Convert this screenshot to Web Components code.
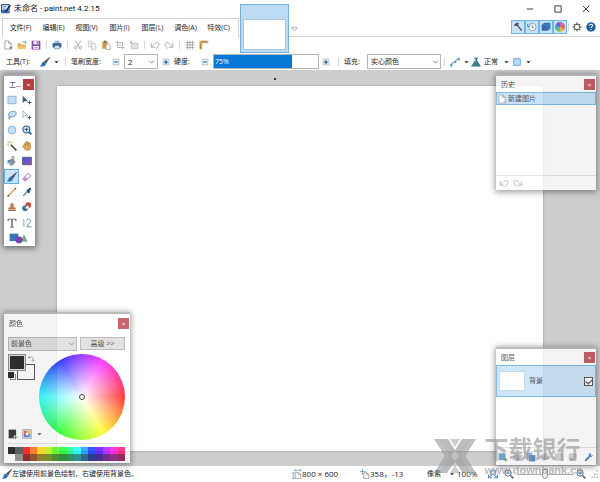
<!DOCTYPE html>
<html lang="zh-CN">
<head>
<meta charset="utf-8">
<title>未命名 - paint.net 4.2.15</title>
<style>
html,body{height:100%}
body{margin:0;overflow:hidden;background:#fff;color:#222;font:7px/10px "Open Sans","Noto Sans CJK SC",sans-serif}
</style>
</head>
<body>
<paint-app></paint-app>
<script>
const RESET = `*{box-sizing:border-box}
button,input,select{font:inherit;color:inherit;margin:0;padding:0;border:0;background:none;border-radius:0}
button{display:flex;align-items:center;justify-content:center}`;

function define(name, html, setup) {
  const template = document.createElement('template');
  template.innerHTML = `<style>${RESET}</style>` + html;
  customElements.define(name, class extends HTMLElement {
    connectedCallback() {
      if (this.shadowRoot) return;
      this.attachShadow({mode: 'open'}).append(template.content.cloneNode(true));
      if (setup) setup(this, this.shadowRoot);
    }
  });
}

const page = (c) => `<path d="M3 1.5h6l4 4V14.5H3z M9 1.5v4h4" fill="#fff" stroke="${c}"/>`;
const brush = `<path d="M15.5.5 7 7.500l2.500 2.500z" fill="#444" stroke="#555" stroke-width="1.200"/><path d="M.5 14.800c2-.3 2-2 2.500-4C4 8 6.500 7.500 8 9s1 4-1.200 5-4.300.9-6.300.8z" fill="#2470b8" stroke="#2470b8"/>`;
const arrowTail = `<path d="M12 9v6M9 12h6" stroke="#34516e" stroke-width="1.500"/>`;
const lens = (mark) => `<circle cx="6.500" cy="6.500" r="5" fill="#eef6fc" stroke="#55697c" stroke-width="1.500"/><path d="m10.500 10.500 4.500 4.500" stroke="#55697c" stroke-width="2.500"/>${mark}`;
const plusMark = `<path d="M4 6.500h5M6.500 4v5" stroke="#1f6fb5" stroke-width="1.400"/>`;
const undo = `<path d="M2 5v6.500h6.500M2.500 11 8 5.500c4-3.500 8 0 5.500 4L10 14" fill="none" stroke="#999" stroke-width="1.300"/>`;
const ICONS = {
  app: `<path d="M1 1h12v13H1z" fill="#dcebf7" stroke="#23407c" stroke-width="1.600"/><path d="M2 9h10v4H2z" fill="#2d62ac"/><path d="M3 4h6M3 6.500h4" stroke="#4d77ad"/><path d="m15 2-6 8-2 2" stroke="#222d46" stroke-width="2.500"/>`,
  new: page('#777') + `<path d="M12.500 10v5M10 12.500h5" stroke="#4c9a50" stroke-width="1.600"/>`,
  page: page('#777') + `<path d="M10 12.500h5" stroke="#8aa" stroke-width="1.500"/>`,
  open: `<path d="M1 5h5l1 2h7v7H1z" fill="#e4ad54"/><path d="m1 14 2-5h12l-2 5z" fill="#f1c470"/><path d="M9 3h5v3" fill="none" stroke="#5c9a5e" stroke-width="1.500"/>`,
  save: `<path d="M1 1h12.500L15 2.500V15H1z" fill="#8a4fa4"/><path d="M4 1.800h8v5H4zM3.500 9.500h9V14h-9z" fill="#fff"/><path d="M9 2.500h2v3H9zM5 11h6v1H5z" fill="#8a4fa4"/>`,
  print: `<path d="M4 1h8v4H4z" fill="#9ebbd5"/><path d="M1 5h14v7H1z" fill="#2f5f94"/><path d="M4 9h8v5H4z" fill="#d6e7f5" stroke="#4c79a9"/>`,
  cut: `<path d="m3 1 7.500 10M13 1 5.500 11" stroke="#a4a4a4" stroke-width="1.400"/><g fill="none" stroke="#a4a4a4" stroke-width="1.400"><circle cx="4" cy="12.500" r="2"/><circle cx="12" cy="12.500" r="2"/></g>`,
  copy: `<path d="M2 1.500h5l2 2V11H2z" fill="#eee" stroke="#b4b4b4"/><path d="M7 5.500h5l2 2V15H7z" fill="#f5f5f5" stroke="#b4b4b4"/>`,
  paste: `<path d="M2 2.500h9V14H2z" fill="#d99b46"/><path d="M4.500 1h4v3h-4z" fill="#666"/><path d="M8 6.500h4l2.500 2V15H8z" fill="#fff" stroke="#888"/>`,
  crop: `<path d="M4 1v11h11M1 4h11v11" fill="none" stroke="#b3b3b3" stroke-width="1.500"/><path d="M6 6h4v4H6z" fill="#ddd"/>`,
  deselect: `<path d="M4 5h10v9H4z" fill="#e2e2e2" stroke="#b0b0b0"/><path d="m1 1 5 5m0-5L1 6" stroke="#aaa" stroke-width="1.400"/>`,
  undo, redo: `<g transform="matrix(-1 0 0 1 16 0)">${undo}</g>`,
  grid: `<path d="M4 1v14M8 1v14M12 1v14M1 4h14M1 8h14M1 12h14" stroke="#999" stroke-width="1.200"/>`,
  ruler: `<path d="M1 1h14v4H5v10H1z" fill="#d4a165"/><path d="M5 1v2M8 1v2M11 1v2M1 6h2M1 9h2M1 12h2" stroke="#755126"/>`,
  hammer: `<path d="m2 5 4-3.500 3 1L7 5 5 6z" fill="#444" stroke="#444"/><path d="m6 4 8 10" stroke="#555" stroke-width="2"/>`,
  clock: `<circle cx="8.500" cy="8" r="6" fill="#f9fcff" stroke="#8796a4" stroke-width="1.400"/><path d="M8 4v4.500l3 1" fill="none" stroke="#5b7388" stroke-width="1.300"/><path d="M1 3v4h4" fill="none" stroke="#3c8bcc" stroke-width="1.500"/>`,
  layers: `<path d="M1 5 5 1h10v9l-4 4H1z" fill="#336cae"/><path d="M1 5h10l4-4M11 5v9" stroke="#5a8fc7" fill="none"/>`,
  gear: `<path d="M8 .8v3M8 12.200v3M.8 8h3M12.200 8h3M3 3l2 2M11 11l2 2M3 13l2-2M11 5l2-2" stroke="#555" stroke-width="2"/><circle cx="8" cy="8" r="4.300" fill="#fff" stroke="#555" stroke-width="1.500"/>`,
  help: `<circle cx="8" cy="8" r="7.500" fill="#205e9d"/><path d="M5.500 6c0-3.500 5.500-3 5 0-.3 1.500-2.500 1.500-2.500 3.500M8 11v1.800" fill="none" stroke="#fff" stroke-width="1.700"/>`,
  brush,
  minus: `<path d="M3.500 3.500h9v9h-9z" fill="#f8fbff" stroke="#7f9fbd"/><path d="M5 8h6" stroke="#245f98" stroke-width="1.800"/>`,
  plus: `<path d="M3.500 3.500h9v9h-9z" fill="#f8fbff" stroke="#7f9fbd"/><path d="M5 8h6M8 5v6" stroke="#245f98" stroke-width="2"/>`,
  caret: `<path d="M3 6h10l-5 5z" fill="#222"/>`,
  curve: `<path d="M2 13c2-7 5-3 6-5s2-4 6-5" fill="none" stroke="#4a88bf" stroke-width="1.600"/><g fill="#6e9cc6"><path d="M0 11h4v4H0zM6 6h4v4H6zM12 1h4v4h-4z"/></g>`,
  flask: `<path d="M5 1h6v1.500h-1V6l6 9H0l6-9V2.500H5z" fill="#35749a"/><path d="m5 9-3 5h6l2-5z" fill="#438f5c"/><path d="M7 3h1v4H7z" fill="#cfe5f5"/>`,
  circleSelect: `<circle cx="8" cy="8" r="6" fill="#b8dbf6" stroke="#68a5d5" stroke-width="1.500"/><path d="M2 2h3M11 2h3M2 14h3M11 14h3M2 2v3M14 2v3M2 11v3M14 11v3" stroke="#8ab4d6"/>`,
  rect: `<path d="M1.500 2h13v12h-13z" fill="#c1e0f7" stroke="#6b99be"/>`,
  move: `<path d="M1 1v12l3-3h6z" fill="#34658f"/>${arrowTail}`,
  moveSel: `<path d="M1.500 1.500V12l3-2.500h5z" fill="#fff" stroke="#7390a9"/>${arrowTail}`,
  lasso: `<path d="M4 11C1 7 3 3 9 2s7 4 4 7-6 2-9 2zc-3 1-2 3 0 2s1 2-1 2" fill="#c5e3f8" stroke="#527fa6" stroke-width="1.300"/>`,
  ellipse: `<circle cx="8" cy="8" r="6.300" fill="#c1e0f7" stroke="#6b99be"/>`,
  zoom: `<circle cx="7" cy="7" r="5.500" fill="#d7ebfb" stroke="#275d8e" stroke-width="1.800"/><path d="m11 11 4 4" stroke="#275d8e" stroke-width="2.800"/><path d="M4 7h6M7 4v6" stroke="#275d8e" stroke-width="1.600"/>`,
  wand: `<path d="m6 6 9 9" stroke="#444" stroke-width="2.500"/><path d="M5 0v3M0 5h3M1 1l2 2M9 2 7 4M2 9l2-2" stroke="#c39b3c" stroke-width="1.500"/>`,
  hand: `<path d="M3 9V5l2-.5L5.500 2 8 1l2 1 2 .5 1 2 1 5-2 5H6L1 9l1-1z" fill="#e0a95d" stroke="#a96f2b"/><path d="M5.500 4v4M8 2v5M10.500 3v4" stroke="#a96f2b"/>`,
  bucket: `<path d="m8 4 6 5-5 6H4V7z" fill="#8b949b"/><path d="M8 7V1h3v6" fill="none" stroke="#555"/><path d="M1 13V7l6-2-3 4z" fill="#3d7fbd"/>`,
  gradient: `<defs><linearGradient id="g" x2="1" y2="1"><stop stop-color="#315fce"/><stop offset="1" stop-color="#a248c2"/></linearGradient></defs><path d="M1 2h14v12H1z" fill="url(#g)" stroke="#556070" stroke-width="1.500"/>`,
  eraser: `<path d="m2 10 8-8 4 4-8 8H4l-2-2z" fill="#fff" stroke="#a153b1" stroke-width="1.500"/><path d="m5 7 4 4-3 3H4l-2-2v-2z" fill="#c994d2"/>`,
  pencil: `<path d="M1 15 13.500 2.500" stroke="#d29b50" stroke-width="2"/><path d="m1 15 2-2M13 3l1.500-1.500" stroke="#534335" stroke-width="2"/>`,
  picker: `<path d="m2 14 7-7" stroke="#5b89ae" stroke-width="2"/><path d="m8 5 4 4M9.500 6.500 14 2" stroke="#284966" stroke-width="3.500"/>`,
  stamp: `<path d="M6 2h4l1 3-1 3 4 1v3H2V9l4-1-1-3z" fill="#c3774c"/><path d="M2 13.500h12" stroke="#755846" stroke-width="1.500"/>`,
  recolor: `<circle cx="10" cy="5" r="4.500" fill="#c94735"/><circle cx="5" cy="10" r="4.500" fill="#2e6d9d"/><path d="m5 9 4-4 3 3-4 4z" fill="#fff" stroke="#777"/>`,
  letter: `<path d="M1 1h14v4h-1.200c-.3-2-1-2.500-3-2.500H9.200V13c0 .8.500 1 2 1v1H4.800v-1c1.500 0 2-.2 2-1V2.500H5.200c-2 0-2.700.5-3 2.500H1z" fill="#666"/>`,
  line: `<path d="M1 2c2 0 2 2 2 5v7" fill="none" stroke="#7ea1bc" stroke-width="1.500"/><path d="M7 4c1-3 7-3 7 1 0 3-5 4-6 9h7" fill="none" stroke="#5b8fbb" stroke-width="1.500"/>`,
  shapes: `<path d="M1 1h14v12H1z" fill="#3674b3"/><path d="m24 2 6 12H18z" fill="#77ad89"/><circle cx="16" cy="11" r="5.500" fill="#7544a8"/>`,
  swap: `<path d="M3 6V3h7c3 0 3 2 3 4v5M1 5l2-4 2 4zM10 11h6l-3 4z" fill="none" stroke="#4a83b4" stroke-width="1.600"/>`,
  addColor: `<path d="M1 1h12v14H1z" fill="#111"/><path d="M9 13h7M12.500 9.500v7" stroke="#fff" stroke-width="4"/><path d="M9 13h6M12 10v6" stroke="#377b4a" stroke-width="1.600"/>`,
  palette: `<path d="M1 1h14v14H1z" fill="#d5e0ec" stroke="#777"/><path d="M3 3h5v5H3z" fill="#dd4d3f"/><path d="M8 3h5v5H8z" fill="#e5b82d"/><path d="M3 8h5v5H3z" fill="#7650b6"/><path d="M8 8h5v5H8z" fill="#3488ce"/><path d="M6 6h4v4H6z" fill="#fff"/>`,
  size: `<path d="M5 6h6l3 3v6H5zM11 6v3h3" fill="#fff" stroke="#777"/><path d="M2 6v9M0 7l2-2 2 2M0 14l2 2 2-2M5 2h9M6 0 4 2l2 2M13 0l2 2-2 2" fill="none" stroke="#407bad"/>`,
  position: `<path d="M6 6h5l3 3v6H6zM11 6v3h3" fill="#fff" stroke="#777"/><path d="M4 0v9M0 4h9" stroke="#407bad"/>`,
  fit: `<path d="M4 2h8v7H4z" fill="#c9dced" stroke="#507da5"/><path d="m1 14 5-4M15 14l-5-4M1 9v5h5M15 9v5h-5" stroke="#347bb9" stroke-width="1.500" fill="none"/>`,
  zoomOut: lens(`<path d="M4 6.500h5" stroke="#1f6fb5" stroke-width="1.400"/>`),
  zoomIn: lens(plusMark),
  grip: `<path d="M12 2h2v2h-2zM8 7h2v2H8zM12 7h2v2h-2zM4 12h2v2H4zM8 12h2v2H8zM12 12h2v2h-2z" fill="#999"/>`,
  addLayer: `<path d="M1 2h11v11H1z" fill="#5993cc"/><path d="M12 9v6M9 12h6" stroke="#4e9460" stroke-width="2"/>`,
  delLayer: `<path d="M2 3h10v10H2z" fill="#bbb"/><path d="m9 9 5 5m0-5-5 5" stroke="#999" stroke-width="2"/>`,
  dupLayer: `<path d="M1 1h9v10H1z" fill="#75aadd"/><path d="M5 5h10v10H5z" fill="#3477b9"/>`,
  mergeLayer: `<path d="M2 3h11v10H2z" fill="#ccc"/><path d="M7 2v10M4 9l3 3 3-3" stroke="#999" fill="none" stroke-width="1.500"/>`,
  plainLayer: `<path d="M2 3h11v10H2z" fill="#ccc" stroke="#aaa"/>`,
  wrench: `<path d="m2 14 7-7" stroke="#2b69a8" stroke-width="3"/><path d="M14.500 4.500 12 6l-2-2 1.500-2.500C8 1 6.500 4 8 6.500S13 9 14.500 4.500z" fill="#2b69a8"/>`,
  down: `<path d="m2.500 5 5.500 5.500L13.500 5" fill="none" stroke="#555" stroke-width="1.600"/>`,
  tabDown: `<path d="M2 5h12v2l-6 5-6-5z" fill="#fff" stroke="#5b83a9" stroke-width="1.400"/>`,
  min: `<path d="M3 8h10" stroke="#333" stroke-width="1.500"/>`,
  max: `<path d="M3 3h10v10H3z" fill="none" stroke="#333" stroke-width="1.500"/>`,
  close: `<path d="m3 3 10 10M13 3 3 13" stroke="#333" stroke-width="1.500"/>`,
  x: `<path d="m4 4 8 8m0-8-8 8" stroke="#fff" stroke-width="2.500"/>`
};

define('ui-icon', `<style>:host{display:block;flex:none;width:var(--icon,10px);height:10px}svg{display:block;width:100%;height:100%;overflow:visible}div{height:100%}.wheel{border-radius:50%;background:conic-gradient(from 90deg,#e75b4d,#edc452,#76b96a,#45a9d2,#6759b8,#d46eb7,#e75b4d)}</style>`, (host, root) => {
  const name = host.getAttribute('name');
  const box = document.createElement('div');
  if (name === 'wheel') box.className = 'wheel';
  else box.innerHTML = `<svg viewBox="0 0 ${name === 'shapes' ? 32 : 16} 16" fill="none" aria-hidden="true">${ICONS[name]}</svg>`;
  root.append(box);
});

define('tool-divider', `<style>:host{display:flex;flex:none;width:7px;height:8px;justify-content:center}i{width:1px;background:#cfd6dc}</style><i></i>`);

define('title-bar', `<style>
:host{display:flex;height:18px;align-items:center;padding-left:1px}
h1{flex:1;margin:0 0 0 3px;font:400 8px/10px Roboto,"Noto Sans CJK SC",sans-serif;color:#111}
button{width:28px;height:18px}
</style>
<ui-icon name="app"></ui-icon><h1><slot></slot></h1>
<button aria-label="最小化"><ui-icon name="min"></ui-icon></button><button aria-label="最大化"><ui-icon name="max"></ui-icon></button><button aria-label="关闭"><ui-icon name="close"></ui-icon></button>`);

define('menu-strip', `<style>
:host{display:flex;height:19px;align-items:stretch}
nav{display:flex;margin-left:2px;border:1px solid #d2d2d2;border-bottom:0;padding:0 3px 0 1px}
nav button{width:33px;white-space:nowrap}
.rest{flex:1;display:flex;justify-content:flex-end;align-items:center;border-bottom:1px solid #d2d2d2;padding-right:2px}
.rest tool-divider{width:3px}
.toggle{width:14px;height:14px;border:1px solid #70b4e8;background:#c6e3f8}
.plain{width:14px;height:14px}
</style>
<nav><button>文件(F)</button><button>编辑(E)</button><button>视图(V)</button><button>图片(I)</button><button>图层(L)</button><button>调色(A)</button><button>特效(C)</button></nav>
<div class="rest">
<button class="toggle" aria-label="工具"><ui-icon name="hammer"></ui-icon></button><button class="toggle" aria-label="历史"><ui-icon name="clock"></ui-icon></button><button class="toggle" aria-label="图层"><ui-icon name="layers"></ui-icon></button><button class="toggle" aria-label="颜色"><ui-icon name="wheel"></ui-icon></button>
<tool-divider></tool-divider>
<button class="plain" aria-label="设置"><ui-icon name="gear"></ui-icon></button><button class="plain" aria-label="帮助"><ui-icon name="help"></ui-icon></button>
</div>`);

define('image-tab', `<style>
:host{position:absolute;left:240px;top:4px;display:flex;align-items:center}
.tab{width:49px;height:49px;padding:14px 2px 2px;border:1px solid #73b0dc;background:#bddcf4;align-items:stretch}
.tab span{flex:1;background:#fff;border:1px solid #a9c6dc}
.more{width:10px;height:10px;--icon:7px}
</style><button class="tab" aria-label="未命名"><span></span></button><button class="more" aria-label="图像列表"><ui-icon name="tabDown"></ui-icon></button>`);

define('command-bar', `<style>:host{display:flex;height:16px;align-items:center;padding-left:1px}button{width:14px;height:14px}</style>`, (host, root) => {
  for (const name of 'new open save | print | cut copy paste crop deselect | undo redo | grid ruler'.split(' ')) {
    root.append(name === '|' ? document.createElement('tool-divider') : iconButton(name));
  }
});

function iconButton(name) {
  const button = document.createElement('button');
  const icon = document.createElement('ui-icon');
  icon.setAttribute('name', name);
  button.setAttribute('aria-label', name);
  button.append(icon);
  return button;
}

define('option-bar', `<style>
:host{display:flex;height:17px;align-items:center;padding-left:6px;white-space:nowrap}
label,span{flex:none}
button{flex:none;height:14px;width:14px}
.drop{width:8px;--icon:7px}
.list{--icon:7px}
.round{width:8px}
.step{width:16px}
.w1{width:32px}.w2{width:37px}.w3{width:23px}
tool-divider{width:11px}
tool-divider.n{width:7px}
.combo{display:flex;width:34px;height:15px;border:1px solid #b5b5b5;align-items:center}
.combo input{flex:1;min-width:0;padding-left:3px;font-size:8px}
.combo button{width:12px;--icon:7px}
.bar{position:relative;width:106px;height:15px}
.bar input{appearance:none;display:block;width:100%;height:100%;border:1px solid #b5b5b5;background:linear-gradient(to right,#0878d7 75%,#fff 75%)}
.bar input::-webkit-slider-thumb{appearance:none;width:1px;height:13px;background:transparent}
.bar output{position:absolute;left:2px;top:3px;color:#fff}
.select{display:grid;width:74px;height:15px;align-items:center}
.select select,.select ui-icon{grid-area:1/1}
.select select{appearance:none;width:100%;height:15px;border:1px solid #b5b5b5;padding-left:3px}
.select ui-icon{justify-self:end;margin-right:2px;--icon:7px;pointer-events:none}
.mode{width:auto;gap:3px;padding:0 1px}
</style>
<span class="w1">工具(T):</span><button aria-label="画笔"><ui-icon name="brush"></ui-icon></button><button class="drop" aria-label="选择工具"><ui-icon name="caret"></ui-icon></button><tool-divider></tool-divider>
<label class="w2" for="w">笔刷宽度:</label><button class="step" aria-label="减小"><ui-icon name="minus"></ui-icon></button>
<div class="combo"><input id="w" value="2"><button aria-label="宽度列表"><ui-icon name="down"></ui-icon></button></div>
<button class="step" aria-label="增大"><ui-icon name="plus"></ui-icon></button>
<label class="w3" for="h">硬度:</label><button class="step" aria-label="减小"><ui-icon name="minus"></ui-icon></button>
<div class="bar"><input id="h" type="range" value="75"><output for="h">75%</output></div>
<button aria-label="增大"><ui-icon name="plus"></ui-icon></button><tool-divider></tool-divider>
<label class="w3" for="f">填充:</label>
<div class="select"><select id="f"><option>实心颜色</option></select><ui-icon name="down"></ui-icon></div>
<tool-divider class="n"></tool-divider>
<button aria-label="曲线"><ui-icon name="curve"></ui-icon></button><button class="drop" aria-label="曲线列表"><ui-icon name="caret"></ui-icon></button>
<button class="mode"><ui-icon name="flask"></ui-icon>正常</button><button class="list" aria-label="混合模式"><ui-icon name="caret"></ui-icon></button>
<button class="round" aria-label="选区"><ui-icon name="circleSelect"></ui-icon></button><button class="list" aria-label="选区列表"><ui-icon name="caret"></ui-icon></button>`);

define('tool-window', `<style>
:host{display:flex;flex-direction:column;position:absolute;background:#fff;border-top:2px solid #aaa;box-shadow:0 1px 6px 1px rgba(0,0,0,.5)}
header{display:flex;flex:none;justify-content:space-between;align-items:center;height:var(--header,16px);padding:1px 1px 0 5px}
h2{margin:0;font-size:7px;font-weight:400;white-space:nowrap}
button{flex:none;width:11px;height:11px;background:#b73c43;--icon:5px}
</style><header><h2></h2><button aria-label="关闭窗口"><ui-icon name="x"></ui-icon></button></header><slot></slot>`, (host, root) => {
  root.querySelector('h2').textContent = host.getAttribute('heading');
});

define('tool-grid', `<style>
:host{display:grid;grid-template-columns:repeat(2,15px);grid-auto-rows:1fr;height:154px}
button.on{border:1px solid #62abe2;background:#cae5fa}
button.wide{grid-column:span 2;--icon:20px}
</style>`, (host, root) => {
  for (const name of 'rect move lasso moveSel ellipse zoom wand hand bucket gradient brush eraser pencil picker stamp recolor letter line shapes'.split(' ')) {
    const button = iconButton(name);
    if (name === 'brush') button.className = 'on';
    if (name === 'shapes') button.className = 'wide';
    root.append(button);
  }
});

define('history-list', `<style>
:host{display:flex;flex-direction:column;flex:1}
ol{flex:1;margin:0;padding:0;list-style:none}
li button{width:100%;height:13px;justify-content:flex-start;gap:1px;border:1px solid #62a9dc;background:#b9dcf6}
footer{display:flex;height:15px;align-items:center;border-top:1px solid #ddd;padding-left:1px}
footer button{width:14px;height:13px}
</style><ol><li><button><ui-icon name="page"></ui-icon>新建图片</button></li></ol><footer><button aria-label="撤销"><ui-icon name="undo"></ui-icon></button><button aria-label="重做"><ui-icon name="redo"></ui-icon></button></footer>`);

define('layer-list', `<style>
:host{display:flex;flex-direction:column;flex:1}
.row{display:flex;height:32px;align-items:center;gap:4px;padding:0 2px;border:1px solid #62a9dc;background:#bfdff7}
.row i{width:26px;height:20px;background:#fff;border:1px solid #b8cddd}
.row span{flex:1}
label{display:contents}
input{appearance:none;width:9px;height:9px;border:1px solid #333;background:#fff;display:grid}
input:checked::before{content:"";place-self:center;width:5px;height:3px;border:solid #222;border-width:0 0 1px 1px;rotate:-45deg}
footer{display:flex;height:18px;align-items:center;margin-top:auto;border-top:1px solid #ddd}
footer button{width:14px;height:14px}
footer button:last-child{margin-left:auto}
</style><div class="row"><label><i></i><span>背景</span><input type="checkbox" checked></label></div>
<footer></footer>`, (host, root) => {
  for (const name of 'addLayer delLayer dupLayer mergeLayer plainLayer plainLayer wrench'.split(' ')) root.querySelector('footer').append(iconButton(name));
});

define('color-picker', `<style>
:host{display:flex;flex-direction:column;padding:5px 5px 2px 4px}
.top{display:flex;justify-content:space-between}
.select{display:grid;width:69px;align-items:center}
.select>*{grid-area:1/1}
select{appearance:none;width:100%;height:14px;border:1px solid #ababab;background:#dadada;padding-left:2px}
.select ui-icon{justify-self:end;margin-right:2px;--icon:7px;pointer-events:none}
.more{width:45px;height:13px;border:1px solid #ababab;background:#dadada}
.mid{display:flex;justify-content:space-between;height:91px;padding-top:3px}
.side{display:flex;flex:none;width:30px;flex-direction:column;justify-content:space-between}
.swatches{display:grid;grid-template-columns:6px 3px 9px 9px;grid-template-rows:10px 7px 9px}
.fg{grid-area:1/1/3/4;background:#000;border:1px solid #777;outline:1px solid #ddd;outline-offset:-2px;z-index:1}
.bg{grid-area:2/3/4/5;background:#fff;border:1px solid #333}
.mini{grid-area:3/1/4/2;width:6px;height:6px;margin-top:1px;background:#000;box-shadow:2px 2px 0 -1px #fff,2px 2px 0 #777}
.swap{grid-area:1/4;width:9px;height:9px;--icon:6px}
.actions{display:flex;align-items:center;padding-bottom:3px}
.actions button{flex:none;width:14px;height:10px;justify-content:flex-start}
.actions button:last-child{width:7px;--icon:7px}
.wheel{display:grid;flex:none;place-items:center;width:86px;height:86px;border-radius:50%;background:radial-gradient(closest-side,#fff,rgba(255,255,255,0)),conic-gradient(from 90deg,#f00,#ff0,#0f0,#0ff,#00f,#f0f,#f00)}
.wheel i{width:6px;height:6px;border:1px solid #111;border-radius:50%;background:#fff}
.palette{display:grid;grid-template-columns:repeat(16,1fr);grid-auto-rows:7px;margin-top:1px;padding-top:3px;border-top:1px solid #ddd}
</style>
<div class="top"><div class="select"><select aria-label="颜色目标"><option>前景色</option></select><ui-icon name="down"></ui-icon></div><button class="more">高级 &gt;&gt;</button></div>
<div class="mid"><div class="side"><div class="swatches"><button class="fg" aria-label="前景色"></button><button class="bg" aria-label="背景色"></button><button class="mini" aria-label="重置颜色"></button><button class="swap" aria-label="交换颜色"><ui-icon name="swap"></ui-icon></button></div>
<div class="actions"><button aria-label="添加颜色"><ui-icon name="addColor"></ui-icon></button><button aria-label="调色板"><ui-icon name="palette"></ui-icon></button><button aria-label="调色板列表"><ui-icon name="caret"></ui-icon></button></div></div>
<div class="wheel"><i></i></div></div><div class="palette"></div>`, (host, root) => {
  const colors = '#000 #404040 #f00 #ff6a00 #ffd800 #b6ff00 #4cff00 #00ff21 #00ff90 #00ffff #0094ff #0026ff #4800ff #b200ff #ff00dc #ff006e #fff #808080 #7f0000 #7f3300 #7f6a00 #5b7f00 #267f00 #007f0e #007f46 #007f7f #004a7f #00137f #21007f #57007f #7f006e #7f0037';
  for (const color of colors.split(' ')) {
    const cell = document.createElement('button');
    cell.style.background = color;
    cell.setAttribute('aria-label', color);
    root.querySelector('.palette').append(cell);
  }
});

define('paint-workspace', `<style>
:host{display:flex;position:relative;flex:1;min-height:0;padding:16px 57px 15px;background:#cdcdcd}
main{flex:1;background:#fff;box-shadow:0 0 2px #888}
.mark{position:absolute;left:274px;top:8px;width:2px;height:2px;background:#333}
.tools{left:4px;top:4px;width:31px}
.history{right:4px;top:4px;width:100px;height:116px}
.colors{left:4px;bottom:3px;width:126px;--header:18px}
.layers{right:4px;bottom:1px;width:100px;height:118px}
.faded{opacity:.78}
</style><main></main><i class="mark"></i>
<tool-window class="tools" heading="工..."><tool-grid></tool-grid></tool-window>
<tool-window class="history faded" heading="历史"><history-list></history-list></tool-window>
<tool-window class="colors faded" heading="颜色"><color-picker></color-picker></tool-window>
<tool-window class="layers faded" heading="图层"><layer-list></layer-list></tool-window>`);

define('status-bar', `<style>
:host{display:flex;height:16px;align-items:center;padding:0 1px 0 2px;white-space:nowrap}
p{flex:1;margin:0}
.cell{display:flex;align-items:center;font-size:8px}
.size{width:68px}.pos{width:67px}
.unit{width:20px}
.drop{width:10px;--icon:6px}
.zoom{width:28px;font-size:8px}
button{width:16px;height:14px}
input{appearance:none;width:56px;height:10px;background:linear-gradient(#aaa,#aaa) center/100% 1px no-repeat}
input::-webkit-slider-thumb{appearance:none;width:6px;height:10px;border:1px solid #999;background:#eee;border-radius:0 0 3px 3px}
</style><ui-icon name="brush"></ui-icon><p>左键使用前景色绘制，右键使用背景色。</p>
<span class="cell size"><ui-icon name="size"></ui-icon>800 × 600</span><span class="cell pos"><ui-icon name="position"></ui-icon>358，-13</span>
<span class="unit">像素</span><button class="drop" aria-label="单位"><ui-icon name="caret"></ui-icon></button><span class="zoom">100%</span>
<button aria-label="适合窗口"><ui-icon name="fit"></ui-icon></button><button aria-label="缩小"><ui-icon name="zoomOut"></ui-icon></button><input type="range" aria-label="缩放"><button aria-label="放大"><ui-icon name="zoomIn"></ui-icon></button><ui-icon name="grip"></ui-icon>`);

define('water-mark', `<style>
:host{position:absolute;right:17px;bottom:6px;display:flex;gap:8px;align-items:center;opacity:.65;color:#96989c;pointer-events:none}
svg{width:42px;height:34px}
div{display:flex;flex-direction:column}
b{font:700 24px/28px "Liberation Sans","Noto Sans CJK SC",sans-serif}
span{font:700 11px/12px "Liberation Sans",sans-serif}
</style><svg viewBox="0 0 42 34" fill="currentColor" aria-hidden="true"><path d="M0 0h14l7 11 7-11h14L31 17l11 17H29l-8-11-8 11H0l11-17z"/><path d="M16 0h10l-5 8zM16 34h10l-5-8z" fill-opacity=".75"/><path d="m21 12 4 5-4 5-4-5z" fill="#fff" fill-opacity=".35"/><path d="m5 3 9 14L5 31M37 3l-9 14 9 14" fill="none" stroke="#fff" stroke-opacity=".25"/></svg><div><b>下载银行</b><span>www.downbank.cn</span></div>`);

define('paint-app', `<style>:host{display:flex;flex-direction:column;position:relative;height:100vh;overflow:hidden}</style>
<title-bar>未命名 - paint.net 4.2.15</title-bar><menu-strip></menu-strip><command-bar></command-bar><option-bar></option-bar><paint-workspace></paint-workspace><status-bar></status-bar><image-tab></image-tab><water-mark></water-mark>`);
</script>
</body>
</html>
